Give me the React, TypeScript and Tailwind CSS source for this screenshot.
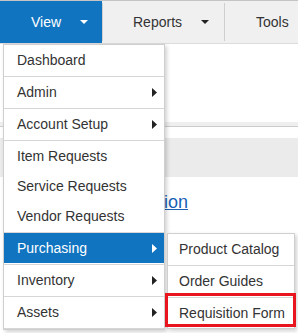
import React from "react";

const font = { fontFamily: '"Liberation Sans", Arial, sans-serif' };

const CaretDown = ({ color }: { color: string }) => (
  <svg width="8" height="4" viewBox="0 0 8 4" className="shrink-0">
    <path d="M0 0h8L4 4z" fill={color} />
  </svg>
);

const CaretRight = ({ color }: { color: string }) => (
  <svg width="5" height="9" viewBox="0 0 5 9" className="shrink-0">
    <path d="M0 0l5 4.5L0 9z" fill={color} />
  </svg>
);

type Item = { label: string; sub?: boolean; divider?: boolean; active?: boolean };

const mainItems: Item[] = [
  { label: "Dashboard", divider: true },
  { label: "Admin", sub: true, divider: true },
  { label: "Account Setup", sub: true, divider: true },
  { label: "Item Requests" },
  { label: "Service Requests" },
  { label: "Vendor Requests", divider: true },
  { label: "Purchasing", sub: true, divider: true, active: true },
  { label: "Inventory", sub: true, divider: true },
  { label: "Assets", sub: true, divider: true },
];

const subItems: Item[] = [
  { label: "Product Catalog", divider: true },
  { label: "Order Guides", divider: true },
  { label: "Requisition Form" },
];

const Divider = () => <div className="h-[2px] border-b border-[#d6d6d6]" />;

export default function App() {
  return (
    <div className="w-[298px] h-[333px] overflow-hidden bg-white relative text-[#333]" style={font}>
      {/* top nav */}
      <div className="flex h-[44px] bg-[#f0f0f0] border-t border-[#c4c4c4] border-b border-b-[#dcdcdc]">
        <div className="w-[102px] flex items-center pl-[31px] gap-[19px] bg-[#1074c0] text-white text-[14px]">
          <span>View</span>
          <CaretDown color="#ffffff" />
        </div>
        <div className="w-px bg-[#cfcfcf] my-[2px]" />
        <div className="w-[121px] flex items-center pl-[30px] gap-[19px] text-[14px]">
          <span>Reports</span>
          <CaretDown color="#222" />
        </div>
        <div className="w-px bg-[#cfcfcf] my-[2px]" />
        <div className="flex items-center pl-[31px] text-[14px]">
          <span>Tools</span>
        </div>
      </div>

      {/* page content behind the menu */}
      <div className="flex flex-col">
        <div className="h-[78px]" />
        <div className="h-[4px] bg-[#efefef]" />
        <div className="h-px bg-[#cccccc]" />
        <div className="h-[11px]" />
        <div className="h-[39px] bg-[#ebebeb]" />
        <div className="pl-[40px] pt-[14px]">
          <span className="text-[18px] text-[#1a5fb4] underline leading-[22px]">Create Requisition</span>
        </div>
      </div>

      {/* dropdown menu */}
      <div className="absolute left-[3px] top-[44px] w-[162px] bg-white border border-[#cfcfcf] shadow-[2px_2px_4px_rgba(0,0,0,0.18)] text-[14px]">
        {mainItems.map((item) => (
          <div key={item.label}>
            <div
              className={`h-[30px] flex items-center justify-between pl-[13px] pr-[7px] ${
                item.active ? "bg-[#1074c0] text-white" : ""
              }`}
            >
              <span>{item.label}</span>
              {item.sub && <CaretRight color={item.active ? "#ffffff" : "#222"} />}
            </div>
            {item.divider && <Divider />}
          </div>
        ))}
      </div>

      {/* submenu */}
      <div className="absolute left-[167px] top-[233px] w-[128px] bg-white border border-[#cfcfcf] shadow-[2px_2px_4px_rgba(0,0,0,0.18)] text-[14px]">
        {subItems.map((item) => (
          <div key={item.label}>
            <div className="h-[30px] flex items-center pl-[11px]">
              <span>{item.label}</span>
            </div>
            {item.divider && <Divider />}
          </div>
        ))}
      </div>

      {/* highlight box */}
      <div className="absolute left-[165px] top-[293px] w-[131px] h-[34px] border-[3px] border-[#e8141e]" />
    </div>
  );
}
